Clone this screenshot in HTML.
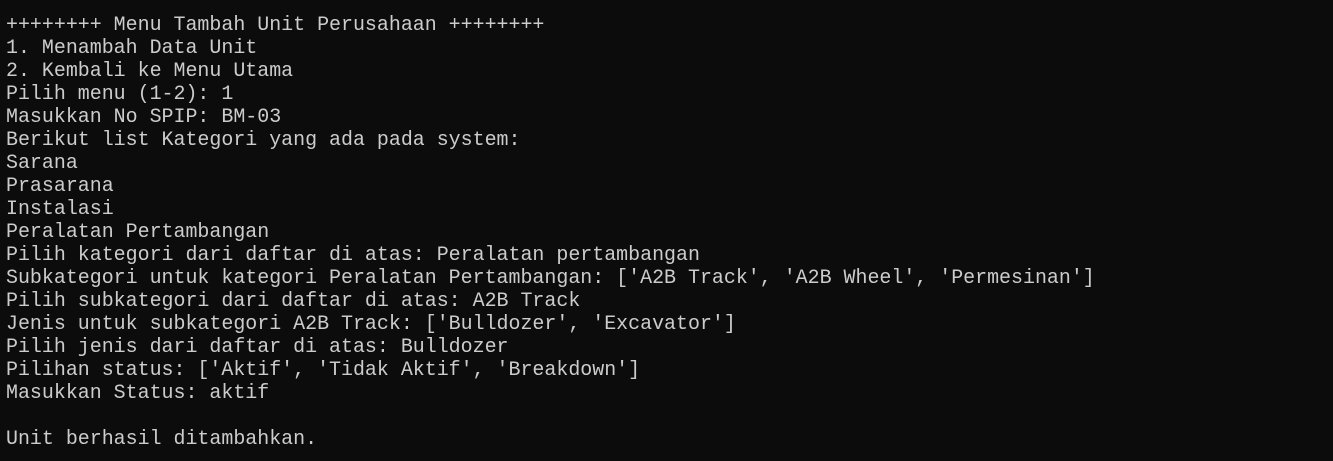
<!DOCTYPE html>
<html><head><meta charset="utf-8"><style>
html,body{margin:0;padding:0;background:#0c0c0c;width:1333px;height:461px;overflow:hidden}
pre{margin:0;position:absolute;left:6px;top:13px;font-family:"Liberation Mono","DejaVu Sans Mono",monospace;font-size:19.95px;line-height:22.98px;color:#cccccc;white-space:pre}
</style></head><body><pre>++++++++ Menu Tambah Unit Perusahaan ++++++++
1. Menambah Data Unit
2. Kembali ke Menu Utama
Pilih menu (1-2): 1
Masukkan No SPIP: BM-03
Berikut list Kategori yang ada pada system:
Sarana
Prasarana
Instalasi
Peralatan Pertambangan
Pilih kategori dari daftar di atas: Peralatan pertambangan
Subkategori untuk kategori Peralatan Pertambangan: ['A2B Track', 'A2B Wheel', 'Permesinan']
Pilih subkategori dari daftar di atas: A2B Track
Jenis untuk subkategori A2B Track: ['Bulldozer', 'Excavator']
Pilih jenis dari daftar di atas: Bulldozer
Pilihan status: ['Aktif', 'Tidak Aktif', 'Breakdown']
Masukkan Status: aktif

Unit berhasil ditambahkan.</pre></body></html>
